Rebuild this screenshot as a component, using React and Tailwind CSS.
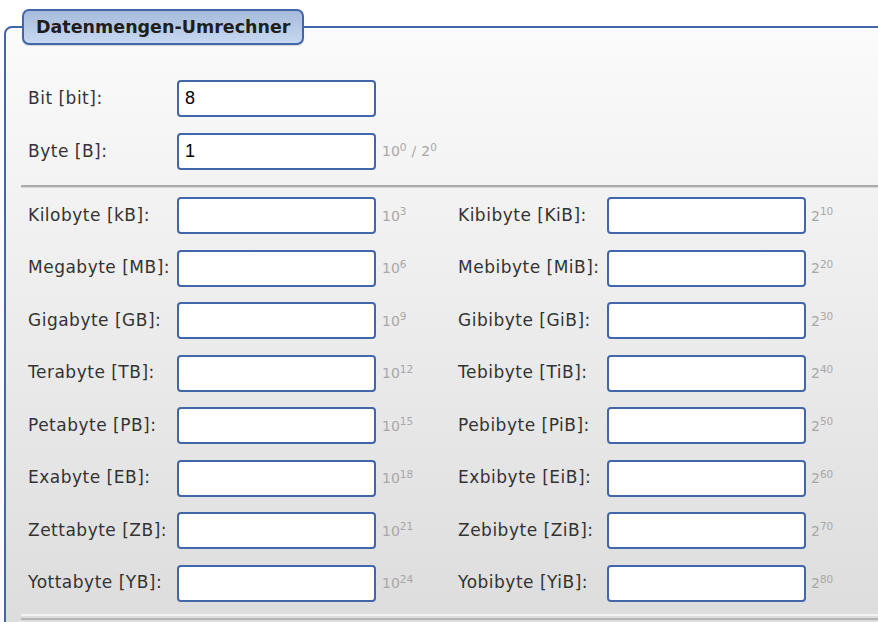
import React from "react";

const rows = [
  ["Kilobyte [kB]:", "10", "3", "Kibibyte [KiB]:", "10"],
  ["Megabyte [MB]:", "10", "6", "Mebibyte [MiB]:", "20"],
  ["Gigabyte [GB]:", "10", "9", "Gibibyte [GiB]:", "30"],
  ["Terabyte [TB]:", "10", "12", "Tebibyte [TiB]:", "40"],
  ["Petabyte [PB]:", "10", "15", "Pebibyte [PiB]:", "50"],
  ["Exabyte [EB]:", "10", "18", "Exbibyte [EiB]:", "60"],
  ["Zettabyte [ZB]:", "10", "21", "Zebibyte [ZiB]:", "70"],
  ["Yottabyte [YB]:", "10", "24", "Yobibyte [YiB]:", "80"],
];

function Field({ value }) {
  return (
    <input
      type="text"
      defaultValue={value}
      className="w-[199px] h-[37px] shrink-0 border-2 border-[#4266a9] rounded-[4px] bg-white px-[6px] text-[18px] text-black font-['Liberation_Sans',Arial,sans-serif] outline-none"
    />
  );
}

function Label({ children }) {
  return (
    <span className="w-[149px] shrink-0 whitespace-nowrap text-[17px] tracking-[0.5px] text-[#333]">
      {children}
    </span>
  );
}

function Pow({ base, exp }) {
  return (
    <span className="text-[14px] text-[#a8a8a8] whitespace-nowrap">
      {base}
      <sup>{exp}</sup>
    </span>
  );
}

export default function App() {
  return (
    <div className="w-[878px] h-[622px] overflow-hidden bg-white font-['DejaVu_Sans',Verdana,sans-serif]">
      <div className="pt-[9px] pl-[4px]">
        <fieldset className="w-[900px] border-2 border-[#4266a9] rounded-[8px] px-[15px] pb-[20px] bg-gradient-to-b from-[#fbfbfb] to-[#dcdcdc]">
          <legend className="ml-px h-[36px] px-[12px] border-2 border-[#4266a9] rounded-[7px] bg-gradient-to-b from-[#a6bbdc] to-[#c7d8f0] text-[17.5px] font-bold text-[#1e1e1e] leading-[32px] shadow-[0_1px_1px_rgba(0,0,0,0.15)]">
            Datenmengen-Umrechner
          </legend>
          <div className="pt-[35px] flex flex-col gap-[16px] pl-[7px]">
            <div className="flex items-center">
              <Label>Bit [bit]:</Label>
              <Field value="8" />
            </div>
            <div className="flex items-center">
              <Label>Byte [B]:</Label>
              <Field value="1" />
              <span className="pl-[6px] flex items-center gap-[5px]">
                <Pow base="10" exp="0" />
                <span className="text-[14px] text-[#a8a8a8]">/</span>
                <Pow base="2" exp="0" />
              </span>
            </div>
          </div>
          <div className="mt-[15px] border-t-2 border-[#ababab] border-b border-b-[#d6d6d6]" />
          <div className="pt-[9px] flex flex-col gap-[15.5px] pl-[7px]">
            {rows.map((r) => (
              <div key={r[0]} className="flex items-center">
                <Label>{r[0]}</Label>
                <Field value="" />
                <span className="w-[82px] shrink-0 pl-[6px]">
                  <Pow base={r[1]} exp={r[2]} />
                </span>
                <Label>{r[3]}</Label>
                <Field value="" />
                <span className="pl-[5px]">
                  <Pow base="2" exp={r[4]} />
                </span>
              </div>
            ))}
          </div>
          <div className="mt-[12px] border-t-2 border-[#f2f2f2] border-b-2 border-b-[#b4b4b4] h-[6px]" />
        </fieldset>
      </div>
    </div>
  );
}
